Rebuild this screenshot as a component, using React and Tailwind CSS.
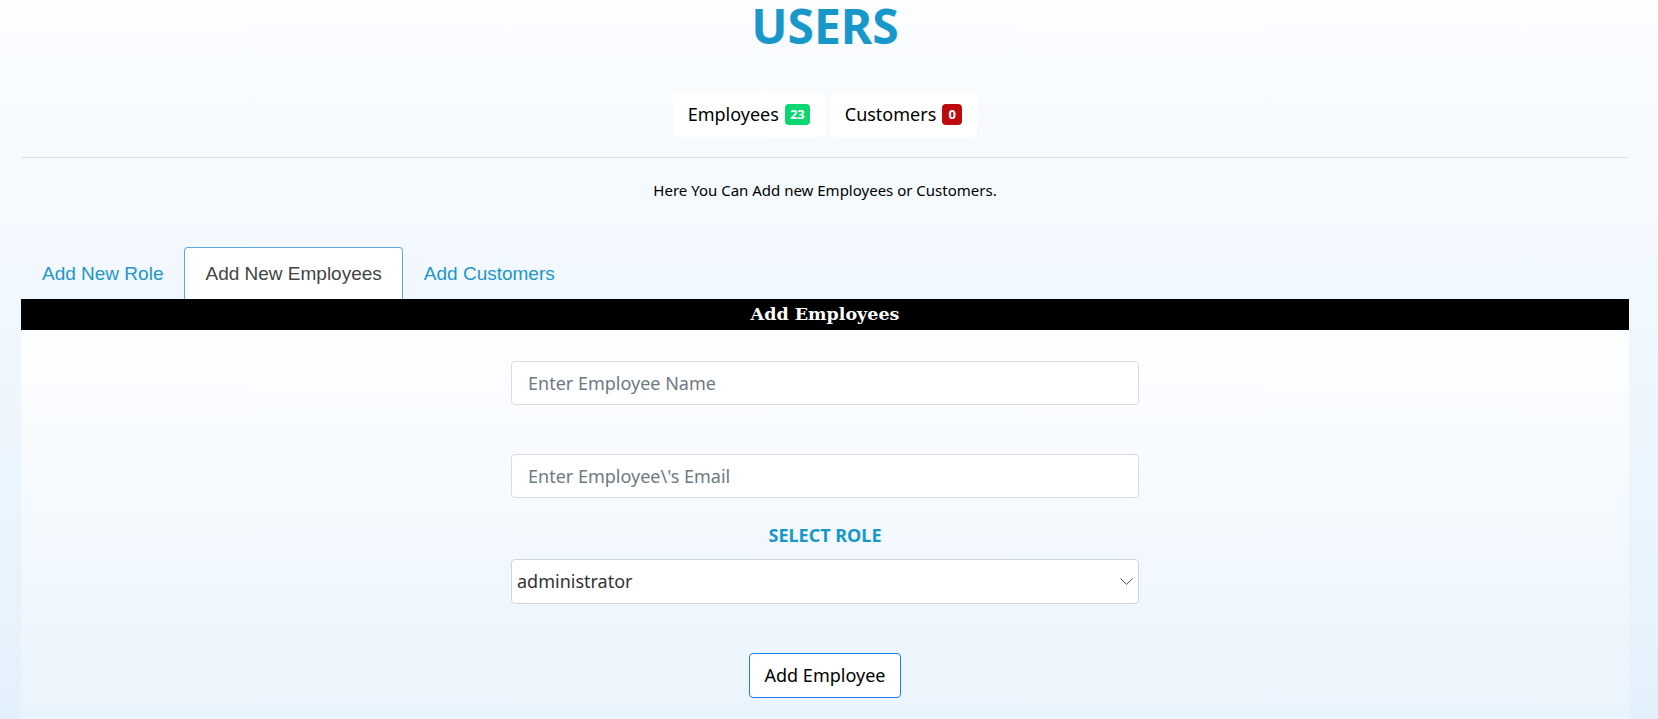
import { useState } from 'react'

const TABS = ['Add New Role', 'Add New Employees', 'Add Customers']
const ROLES = ['administrator', 'manager', 'staff']

function Count({ label, value, color }) {
  return (
    <div className="flex h-[45px] items-center gap-[6px] rounded bg-white px-[15px] text-[18px] text-black">
      <span>{label}</span>
      <span className={`flex h-[21px] min-w-[20px] items-center justify-center rounded-[4px] px-[5px] text-[13px] font-bold leading-none text-white ${color}`}>
        {value}
      </span>
    </div>
  )
}

export default function App() {
  const [tab, setTab] = useState(1)
  const [role, setRole] = useState(ROLES[0])

  return (
    <div className="flex min-h-screen flex-col bg-gradient-to-b from-[#fbfdff] to-[#e3f1fc] pl-[21px] pr-[29px] font-['Noto_Sans',sans-serif]">
      <h1 className="text-center text-[48px] font-bold leading-[52px] text-[#1797ca]">USERS</h1>

      <div className="mt-[40px] flex justify-center gap-[5px]">
        <Count label="Employees" value="23" color="bg-[#0bd670]" />
        <Count label="Customers" value="0" color="bg-[#bd0a0c]" />
      </div>

      <hr className="mt-[20px] border-t border-[#dee2e6]" />

      <p className="mt-[21px] text-center text-[15px] leading-[22px] text-black">
        Here You Can Add new Employees or Customers.
      </p>

      {/* Tabs */}
      <div className="mt-[46px] flex items-end font-['Liberation_Sans',Arial,sans-serif]">
        {TABS.map((t, i) => (
          <button
            key={t}
            onClick={() => setTab(i)}
            className={
              i === tab
                ? 'h-[52px] rounded-t-[4px] border border-b-0 border-[#62a8df] bg-white px-[20px] pt-[2px] text-[19px] text-[#444]'
                : 'h-[52px] border border-transparent px-[20px] pt-[2px] text-[19px] text-[#1e96c8]'
            }
          >
            {t}
          </button>
        ))}
      </div>

      <div className="flex h-[31px] items-center justify-center bg-black font-['DejaVu_Serif',serif] text-[17.5px] font-bold text-white">
        Add Employees
      </div>

      {/* Form panel */}
      <div className="flex flex-1 flex-col items-center bg-gradient-to-b from-[#fdfeff] to-[#eaf4fc] pb-[20px] pt-[31px]">
        <div className="flex w-[628px] flex-col">
          <input
            className="h-[44px] rounded-[4px] border border-[#d9dde2] bg-white px-[16px] text-[18px] outline-none placeholder:text-[#6f7884]"
            placeholder="Enter Employee Name"
          />
          <input
            className="mt-[49px] h-[44px] rounded-[4px] border border-[#d9dde2] bg-white px-[16px] text-[18px] outline-none placeholder:text-[#6f7884]"
            placeholder="Enter Employee\'s Email"
          />
          <label className="mt-[25px] text-center text-[18px] font-bold leading-[24px] text-[#1797ca]">SELECT ROLE</label>
          <div className="relative mt-[12px]">
            <select
              value={role}
              onChange={(e) => setRole(e.target.value)}
              className="h-[45px] w-full appearance-none rounded-[4px] border border-[#cfd5dc] bg-white pl-[5px] text-[18px] text-[#333] outline-none"
            >
              {ROLES.map((r) => (
                <option key={r}>{r}</option>
              ))}
            </select>
            <svg className="pointer-events-none absolute right-[6px] top-[19px]" width="13" height="8" viewBox="0 0 13 8" fill="none">
              <path d="M0.5 0.5L6.5 6.5L12.5 0.5" stroke="#555" strokeWidth="1" />
            </svg>
          </div>
        </div>
        <button className="mt-[49px] h-[45px] w-[152px] rounded-[4px] border border-[#1f7bee] bg-white text-[18px] text-black">
          Add Employee
        </button>
      </div>
    </div>
  )
}
